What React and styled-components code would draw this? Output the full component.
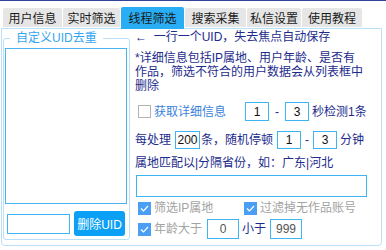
import React from 'react';
import styled, { createGlobalStyle } from 'styled-components';

const Global = createGlobalStyle`
  html, body { margin: 0; padding: 0; background: #fff; }
  body {
    font-family: "Liberation Sans", "Noto Sans CJK SC", sans-serif;
    font-size: 12px;
  }
  * { box-sizing: border-box; }
`;

const Frame = styled.div`
  width: 386px;
  height: 250px;
  overflow: hidden;
  background: #fff;
  border-top: 1px solid #34449a;
`;

const TabBar = styled.div`
  display: flex;
  align-items: flex-end;
  height: 27px;
  padding-left: 3px;
  gap: 1px;
`;

const Tab = styled.div`
  position: relative;
  z-index: ${p => (p.$active ? 2 : 0)};
  width: ${p => p.$w}px;
  height: ${p => (p.$active ? 22 : 19)}px;
  margin-bottom: ${p => (p.$active ? -1 : 1)}px;
  background: ${p => (p.$active ? '#29aef5' : '#e6e6e6')};
  color: #1a1a1a;
  font-family: "Noto Sans CJK SC", sans-serif;
  font-size: 12px;
  line-height: 14px;
  display: flex;
  align-items: center;
  justify-content: center;
  border-radius: 2px 2px 0 0;
`;

const Panel = styled.div`
  margin-left: 1px;
  width: 381px;
  height: 218px;
  border: 1px solid #bcdff8;
  border-radius: 0 0 4px 4px;
  display: flex;
  align-items: flex-start;
`;

const Group = styled.fieldset`
  margin: 2px 0 0 1px;
  padding: 0 0 3px 0;
  width: 127px;
  min-width: 0;
  border: 1px solid #bcdff8;
  border-radius: 3px;
`;

const Legend = styled.legend`
  margin-left: 6px;
  padding: 0 6px;
  color: #34a5f0;
  font-size: 12px;
  line-height: 14px;
`;

const UidArea = styled.textarea`
  display: block;
  margin: 3px 0 0 1px;
  width: 122px;
  height: 156px;
  border: 1px solid #48b4ef;
  padding: 0;
  resize: none;
  outline: none;
  background: #fff;
`;

const BottomRow = styled.div`
  display: flex;
  align-items: center;
  height: 25px;
  margin-top: 7px;
  padding-left: 3px;
`;

const Field = styled.input`
  width: ${p => p.$w}px;
  height: ${p => p.$h}px;
  margin-left: ${p => p.$ml || 0}px;
  border: 1px solid #3db5f2;
  padding: 0;
  background: #fff;
  color: ${p => p.$muted ? '#555' : '#111'};
  font-family: "Liberation Sans", "DejaVu Sans", sans-serif;
  font-size: 12px;
  text-align: center;
  outline: none;
`;

const DeleteButton = styled.button`
  margin-left: 4px;
  width: 51px;
  height: 25px;
  border: none;
  border-radius: 3px;
  background: #0aa0f5;
  color: #fff;
  font-family: "Liberation Sans", "Noto Sans CJK SC", sans-serif;
  font-size: 12px;
  padding: 0;
`;

const Side = styled.div`
  margin-left: 5px;
  padding-top: 1px;
  display: flex;
  flex-direction: column;
  width: 240px;
`;

const Line = styled.div`
  color: #1d2c8c;
  line-height: 14px;
  white-space: nowrap;
  margin-top: ${p => p.$mt || 0}px;
`;

const Row = styled.div`
  display: flex;
  align-items: center;
  height: ${p => p.$h}px;
  margin-top: ${p => p.$mt}px;
  white-space: nowrap;
`;

const Label = styled.span`
  margin-left: ${p => p.$ml || 0}px;
  color: ${p => p.$tone === 'blue' ? '#3b7fdc' : p.$tone === 'gray' ? '#a3a3a3' : '#1d2c8c'};
  line-height: 14px;
`;

const Dash = styled.span`
  width: ${p => p.$w}px;
  text-align: center;
  color: #1d2c8c;
`;

const CheckItem = styled.div`
  display: flex;
  align-items: center;
  width: ${p => (p.$w ? `${p.$w}px` : 'auto')};
  padding-left: 3px;
`;

const Box = styled.span`
  width: 13px;
  height: 13px;
  flex: none;
  display: flex;
  align-items: center;
  justify-content: center;
  background: ${p => (p.$on ? '#4a9ff5' : '#fff')};
  border: 1px solid ${p => (p.$on ? '#4a9ff5' : '#b3b3b3')};
`;

const Check = ({ on }) => (
  <Box $on={on}>
    {on && (
      <svg width="9" height="7" viewBox="0 0 9 7">
        <path d="M1 3.5 L3.5 6 L8 1" fill="none" stroke="#fff" strokeWidth="1.2" />
      </svg>
    )}
  </Box>
);

const tabs = [
  { t: '用户信息', w: 59 },
  { t: '实时筛选', w: 57 },
  { t: '线程筛选', w: 63, active: true },
  { t: '搜索采集', w: 61 },
  { t: '私信设置', w: 54 },
  { t: '使用教程', w: 60 },
];

export default function App() {
  return (
    <>
      <Global />
      <Frame>
        <TabBar>
          {tabs.map(tab => (
            <Tab key={tab.t} $w={tab.w} $active={tab.active}>{tab.t}</Tab>
          ))}
        </TabBar>
        <Panel>
          <Group>
            <Legend>自定义UID去重</Legend>
            <UidArea />
            <BottomRow>
              <Field $w={63} $h={20} />
              <DeleteButton>删除UID</DeleteButton>
            </BottomRow>
          </Group>
          <Side>
            <Line>←&nbsp;&nbsp;一行一个UID，失去焦点自动保存</Line>
            <Line $mt={7}>
              *详细信息包括IP属地、用户年龄、是否有<br />
              作品，筛选不符合的用户数据会从列表框中<br />
              删除
            </Line>
            <Row $h={19} $mt={9}>
              <CheckItem>
                <Check on={false} />
                <Label $ml={3} $tone="blue">获取详细信息</Label>
              </CheckItem>
              <Field $w={24} $h={19} $ml={19} defaultValue="1" />
              <Dash $w={16}>-</Dash>
              <Field $w={24} $h={19} defaultValue="3" />
              <Label $ml={3}>秒检测1条</Label>
            </Row>
            <Row $h={18} $mt={10}>
              <Label>每处理</Label>
              <Field $w={25} $h={18} $ml={4} defaultValue="200" />
              <Label $ml={1}>条，随机停顿</Label>
              <Field $w={24} $h={18} $ml={4} defaultValue="1" />
              <Dash $w={12}>-</Dash>
              <Field $w={24} $h={18} defaultValue="3" />
              <Label $ml={3}>分钟</Label>
            </Row>
            <Line $mt={7}>属地匹配以|分隔省份，如：广东|河北</Line>
            <Row $h={22} $mt={5}>
              <Field $w={231} $h={22} $ml={1} />
            </Row>
            <Row $h={14} $mt={4}>
              <CheckItem $w={106}>
                <Check on />
                <Label $ml={3} $tone="gray">筛选IP属地</Label>
              </CheckItem>
              <CheckItem>
                <Check on />
                <Label $ml={3} $tone="gray">过滤掉无作品账号</Label>
              </CheckItem>
            </Row>
            <Row $h={20} $mt={4}>
              <CheckItem>
                <Check on />
                <Label $ml={3} $tone="gray">年龄大于</Label>
              </CheckItem>
              <Field $w={32} $h={20} $ml={5} $muted defaultValue="0" />
              <Label $ml={3}>小于</Label>
              <Field $w={32} $h={20} $ml={4} $muted defaultValue="999" />
            </Row>
          </Side>
        </Panel>
      </Frame>
    </>
  );
}
